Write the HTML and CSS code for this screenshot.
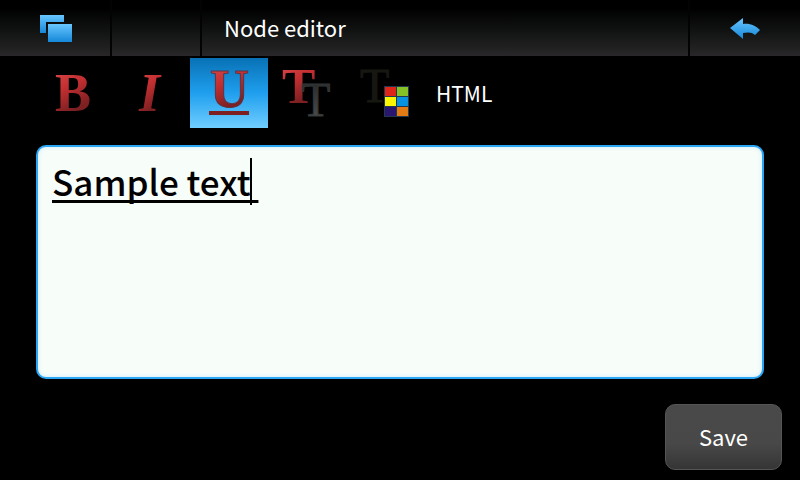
FILE: index.html
```html
<!DOCTYPE html>
<html lang="en">
<head>
<meta charset="utf-8">
<meta name="viewport" content="width=device-width, initial-scale=1">
<title>Node editor</title>
<link rel="stylesheet" href="styles.css">
</head>
<body>
<header class="titlebar">
  <button class="bar-button tasks" type="button" aria-label="Windows">
    <svg width="32" height="28" viewBox="0 0 32 28" aria-hidden="true">
      <defs><linearGradient id="blue" x2="0" y2="1"><stop offset="0" stop-color="#69c6ff"/><stop offset="1" stop-color="#1487d8"/></linearGradient></defs>
      <path d="M0 1H24V8H6V19H0Z" fill="url(#blue)"/>
      <path d="M8 10H32V28H8Z" fill="url(#blue)"/>
    </svg>
  </button>
  <div class="slot"></div>
  <h1 class="title">Node editor</h1>
  <button class="bar-button back" type="button" aria-label="Back">
    <svg width="30" height="22" viewBox="0 0 30 22" aria-hidden="true">
      <path d="M0 11L13 1V7C20 6 26 9 30 13L25 18C22 15 18 15 13 16V22Z" fill="url(#blue)"/>
    </svg>
  </button>
</header>
<main class="page">
  <div class="toolbar" role="toolbar" aria-label="Formatting">
    <button class="tool" type="button" aria-label="Bold">
      <svg width="78" height="70" viewBox="0 0 78 70" aria-hidden="true">
        <defs>
          <linearGradient id="red" x2="0.3" y2="1"><stop offset="0.1" stop-color="#d9494b"/><stop offset="0.45" stop-color="#c42f31"/><stop offset="0.85" stop-color="#7e2022"/></linearGradient>
          <linearGradient id="grey" x2="0" y2="1"><stop offset="0.2" stop-color="#292c2c"/><stop offset="0.8" stop-color="#474a4a"/></linearGradient>
        </defs>
        <text class="glyph bold" x="21" y="53" font-size="54">B</text>
      </svg>
    </button>
    <button class="tool" type="button" aria-label="Italic">
      <svg width="78" height="70" viewBox="0 0 78 70" aria-hidden="true">
        <text class="glyph bold italic" x="27" y="53" font-size="54">I</text>
      </svg>
    </button>
    <button class="tool active" type="button" aria-label="Underline" aria-pressed="true">
      <svg width="78" height="70" viewBox="0 0 78 70" aria-hidden="true">
        <text class="glyph bold outlined" x="20" y="49" font-size="54">U</text>
        <path d="M19 53H59V57H19Z" fill="#7e2022"/>
      </svg>
    </button>
    <button class="tool" type="button" aria-label="Font size">
      <svg width="78" height="70" viewBox="0 0 78 70" aria-hidden="true">
        <text class="glyph bold" x="14" y="45" font-size="50">T</text>
        <text class="glyph grey heavy" x="33" y="58" font-size="48">T</text>
      </svg>
    </button>
    <button class="tool" type="button" aria-label="Text color">
      <svg width="78" height="70" viewBox="0 0 78 70" aria-hidden="true">
        <text class="glyph dark" x="14" y="44" font-size="48">T</text>
        <path d="M38 28H63V59H38Z" fill="#21384f"/>
        <path d="M39 29H50V38H39Z" fill="#df2419"/>
        <path d="M51 29H62V38H51Z" fill="#84c225"/>
        <path d="M39 39H50V48H39Z" fill="#fbf500"/>
        <path d="M51 39H62V48H51Z" fill="#0792df"/>
        <path d="M39 49H50V58H39Z" fill="#29166f"/>
        <path d="M51 49H62V58H51Z" fill="#e47a13"/>
      </svg>
    </button>
    <button class="tool html" type="button">HTML</button>
  </div>
  <div class="editor">
    <textarea class="field" aria-label="Node text" spellcheck="false">Sample text </textarea>
    <span class="caret"></span>
  </div>
  <div class="actions">
    <button class="save" type="button">Save</button>
  </div>
</main>
</body>
</html>
```

FILE: styles.css
```css
* {
  box-sizing: border-box;
}

body {
  margin: 0;
  min-height: 100vh;
  display: flex;
  flex-direction: column;
  background: #000;
  color: #fff;
  font-family: "Noto Sans CJK SC", "Noto Sans", sans-serif;
}

button {
  margin: 0;
  padding: 0;
  border: 0;
  background: none;
  color: inherit;
  font: inherit;
}

svg {
  display: block;
}

.titlebar {
  display: flex;
  height: 56px;
  background: linear-gradient(#000 15%, #111312 55%, #292729);
}

.bar-button {
  display: flex;
  align-items: center;
  justify-content: center;
  width: 112px;
}

.tasks,
.slot {
  border-right: 2px solid #030303;
}

.tasks {
  padding-left: 2px;
}

.slot {
  width: 90px;
}

.title {
  flex: 1;
  margin: 0;
  padding-left: 22px;
  font-size: 22px;
  font-weight: 400;
  line-height: 54px;
}

.back {
  border-left: 2px solid #030303;
}

.page {
  flex: 1;
  display: flex;
  flex-direction: column;
  padding-top: 2px;
}

.toolbar {
  display: flex;
  padding-left: 34px;
}

.tool {
  height: 70px;
}

.active {
  background: linear-gradient(#0871b5, #1f9fee 50%, #70ceff);
}

.html {
  padding: 0 12px;
  font-size: 21px;
  line-height: 68px;
}

.glyph {
  font-family: "Liberation Serif", serif;
  fill: url(#red);
}

.bold {
  font-weight: 700;
}

.italic {
  font-style: italic;
}

.outlined {
  stroke: #5c3546;
  stroke-width: 1px;
}

.grey {
  fill: url(#grey);
}

.heavy {
  stroke: #343737;
  stroke-width: 1px;
}

.dark {
  fill: #171712;
  stroke: #171712;
  stroke-width: 1px;
}

.editor {
  position: relative;
  flex: 1;
  display: flex;
  margin: 17px 36px 25px;
}

.field {
  flex: 1;
  padding: 8px 14px;
  border: 2px solid #2ba6f5;
  border-radius: 10px;
  outline: 0;
  resize: none;
  background: #f7fdf9;
  box-shadow: inset 0 0 4px #c9e8fa;
  color: #000;
  font: 500 35px/52px "Noto Sans CJK SC", "Noto Sans", sans-serif;
  text-decoration: underline 3px;
  text-decoration-skip-ink: none;
  text-underline-offset: 4px;
}

.caret {
  position: absolute;
  left: 214px;
  top: 13px;
  width: 2px;
  height: 47px;
  background: #000;
}

.actions {
  display: flex;
  justify-content: flex-end;
  padding: 0 18px 10px;
}

.save {
  width: 117px;
  height: 66px;
  padding-bottom: 3px;
  border: 1px solid #555;
  border-radius: 10px;
  background: linear-gradient(#494949, #484848 60%, #353535);
  font-size: 22px;
}
```
